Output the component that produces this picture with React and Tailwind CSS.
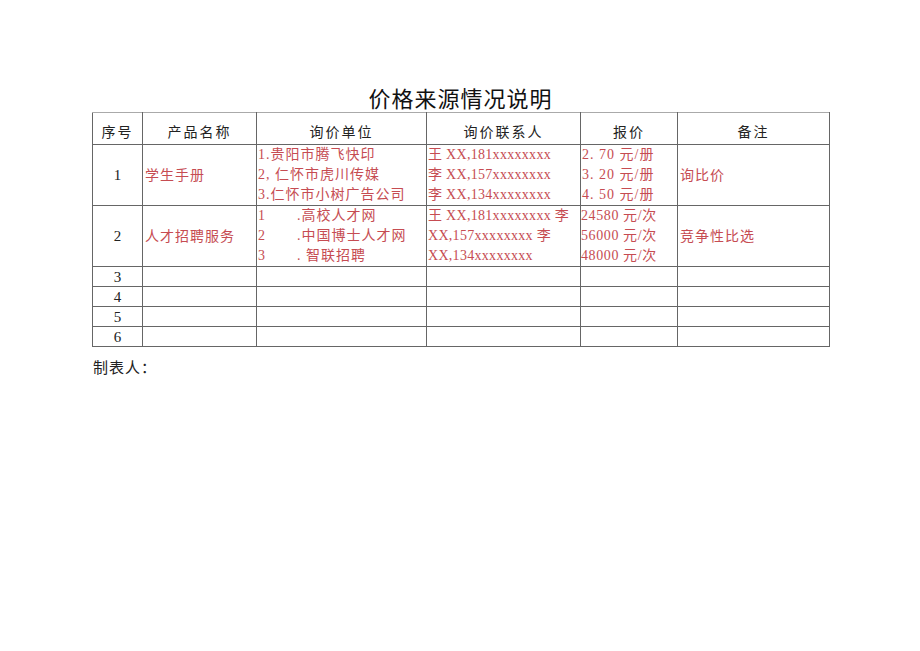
const serif = { fontFamily: '"Liberation Serif", "Noto Sans CJK SC", serif' }

const rows1 = {
  no: '1',
  name: '学生手册',
  units: ['1.贵阳市腾飞快印', '2, 仁怀市虎川传媒', '3.仁怀市小树广告公司'],
  contacts: ['王 XX,181xxxxxxxx', '李 XX,157xxxxxxxx', '李 XX,134xxxxxxxx'],
  prices: ['2. 70 元/册', '3. 20 元/册', '4. 50 元/册'],
  note: '询比价',
}

const rows2 = {
  no: '2',
  name: '人才招聘服务',
  units: [
    ['1', '.高校人才网'],
    ['2', '.中国博士人才网'],
    ['3', '. 智联招聘'],
  ],
  contacts: ['王 XX,181xxxxxxxx 李', 'XX,157xxxxxxxx 李', 'XX,134xxxxxxxx'],
  prices: ['24580 元/次', '56000 元/次', '48000 元/次'],
  note: '竞争性比选',
}

function Lines({ items }) {
  return (
    <div className="flex flex-col">
      {items.map((t) => (
        <div key={t} className="leading-[20px] whitespace-nowrap">{t}</div>
      ))}
    </div>
  )
}

const cell = 'border border-[#666] p-0 align-middle'
const head = 'border border-[#666] border-t-[#aaa] p-0 font-normal align-bottom pb-[1px]'
const red = 'text-[#c64c52] text-[14px]'

export default function App() {
  return (
    <div className="w-[920px] h-[651px] bg-white" style={serif}>
      <div className="ml-[92px] w-[737px] pt-[82px]">
        <h1
          className="h-[30px] text-center text-[22px] leading-[30px] text-[#111] tracking-[1px]"
          style={{ fontFamily: '"Noto Sans CJK SC", sans-serif' }}
        >
          价格来源情况说明
        </h1>
        <table className="w-[737px] border-collapse table-fixed text-[#222]">
          <colgroup>
            <col className="w-[50px]" />
            <col className="w-[114px]" />
            <col className="w-[170px]" />
            <col className="w-[154px]" />
            <col className="w-[97px]" />
            <col className="w-[152px]" />
          </colgroup>
          <thead>
            <tr className="h-[32px] text-[14px] leading-[20px] tracking-[2px]">
              <th className={head}>序号</th>
              <th className={head}>产品名称</th>
              <th className={head}>询价单位</th>
              <th className={head}>询价联系人</th>
              <th className={head}>报价</th>
              <th className={head}>备注</th>
            </tr>
          </thead>
          <tbody>
            <tr className="h-[60px]">
              <td className={`${cell} text-center text-[15px]`}>{rows1.no}</td>
              <td className={`${cell} ${red} tracking-[1px] pl-[2px]`}>{rows1.name}</td>
              <td className={`${cell} ${red} tracking-[1px] pl-[1px]`}>
                <Lines items={rows1.units} />
              </td>
              <td className={`${cell} ${red} tracking-[0.3px] pl-[1px]`}>
                <Lines items={rows1.contacts} />
              </td>
              <td className={`${cell} ${red} tracking-[1px] pl-[1px]`}>
                <Lines items={rows1.prices} />
              </td>
              <td className={`${cell} ${red} tracking-[1px] pl-[2px]`}>{rows1.note}</td>
            </tr>
            <tr className="h-[60px]">
              <td className={`${cell} text-center text-[15px]`}>{rows2.no}</td>
              <td className={`${cell} ${red} tracking-[1px] pl-[2px]`}>{rows2.name}</td>
              <td className={`${cell} ${red} tracking-[1px] pl-[1px]`}>
                <div className="flex flex-col">
                  {rows2.units.map(([n, t]) => (
                    <div key={n} className="flex leading-[20px] whitespace-nowrap">
                      <span className="w-[39px]">{n}</span>
                      <span>{t}</span>
                    </div>
                  ))}
                </div>
              </td>
              <td className={`${cell} ${red} tracking-[0.3px] pl-[1px]`}>
                <Lines items={rows2.contacts} />
              </td>
              <td className={`${cell} ${red} tracking-[0.6px]`}>
                <Lines items={rows2.prices} />
              </td>
              <td className={`${cell} ${red} tracking-[1px] pl-[2px]`}>{rows2.note}</td>
            </tr>
            {['3', '4', '5', '6'].map((n) => (
              <tr key={n} className="h-[20px]">
                <td className={`${cell} text-center text-[15px] leading-[18px]`}>{n}</td>
                <td className={cell}></td>
                <td className={cell}></td>
                <td className={cell}></td>
                <td className={cell}></td>
                <td className={cell}></td>
              </tr>
            ))}
          </tbody>
        </table>
        <p className="mt-[11px] ml-[1px] text-[15px] leading-[20px] tracking-[1px] text-[#222]">制表人：</p>
      </div>
    </div>
  )
}
